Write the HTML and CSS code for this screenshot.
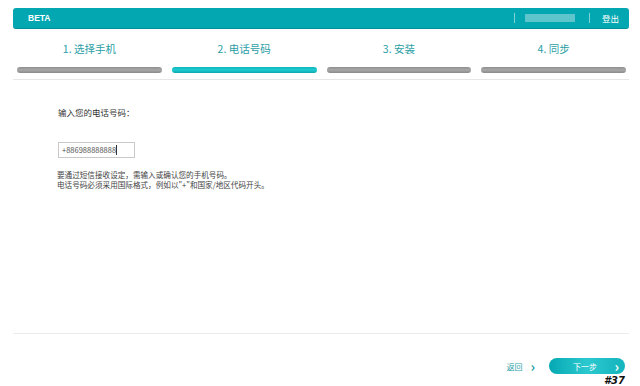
FILE: index.html
```html
<!DOCTYPE html>
<html lang="zh-CN">
<head>
	<meta charset="UTF-8">
	<title>电话号码</title>
	<link rel="stylesheet" href="styles.css">
</head>
<body>
<div class="page">
    <header class="topbar">
        <span class="brand">BETA</span>
        <div class="user">
            <span class="sep"></span>
            <span class="name"></span>
            <span class="sep"></span>
            <a href="javascript:void(0);" class="logout">登出</a>
        </div>
    </header>

    <ol class="steps">
        <li><span class="label">1. 选择手机</span><span class="bar"></span></li>
        <li class="active"><span class="label">2. 电话号码</span><span class="bar"></span></li>
        <li><span class="label">3. 安装</span><span class="bar"></span></li>
        <li><span class="label">4. 同步</span><span class="bar"></span></li>
    </ol>

    <main class="content">
        <p class="prompt">输入您的电话号码：</p>
        <div class="field">+886988888888<span class="caret"></span></div>
        <p class="help">要通过短信接收设定，需输入或确认您的手机号码。<br>电话号码必须采用国际格式，例如以"+"和国家/地区代码开头。</p>
    </main>

    <footer class="actions">
        <a href="javascript:void(0);" class="back">返回<span class="chev">&#x203A;</span></a>
        <a href="javascript:void(0);" class="next"><span>下一步</span><span class="chev">&#x203A;</span></a>
    </footer>
</div>
<div class="badge">#37</div>
</body>
</html>
```

FILE: styles.css
```css
body,html{
    padding: 0;
    margin: 0;
    background: #ffffff;
    font-family: "Noto Sans CJK SC", "Liberation Sans", sans-serif;
    color: #333333;
}
.page{
    width: 640px;
    height: 386px;
    padding: 8px 11px 0 13px;
    box-sizing: border-box;
}
.topbar{
    height: 21px;
    background: #03a7b2;
    border-bottom: 1px solid #02909a;
    border-radius: 3px;
    display: flex;
    align-items: center;
    justify-content: space-between;
    padding: 0 10px 0 15px;
    box-sizing: border-box;
    color: #ffffff;
}
.brand{
    font-family: "Liberation Sans", sans-serif;
    font-weight: bold;
    font-size: 8.5px;
}
.user{
    display: flex;
    align-items: center;
}
.sep{
    width: 1px;
    height: 10px;
    background: #7fd2d8;
}
.name{
    width: 50px;
    height: 8px;
    margin: 0 14px 0 10px;
    background: #5ec5cc;
}
.logout{
    color: #ffffff;
    text-decoration: none;
    font-size: 8.5px;
    margin-left: 12px;
}
.steps{
    list-style: none;
    margin: 14px 0 0 0;
    padding: 0 3px 6px 4px;
    display: grid;
    grid-template-columns: repeat(4, 1fr);
    column-gap: 10px;
    border-bottom: 1px solid #e6e6e6;
}
.steps li{
    display: flex;
    flex-direction: column;
    align-items: center;
}
.label{
    font-size: 10.5px;
    line-height: 12px;
    color: #2b9ea6;
}
.bar{
    margin-top: 12px;
    width: 100%;
    height: 6px;
    border-radius: 3px;
    background: linear-gradient(#8f8f8f, #a8a8a8 50%, #8a8a8a);
}
.active .bar{
    background: linear-gradient(#0fb4bc, #1fcbd1 50%, #0aa6ae);
}
.content{
    height: 254px;
    box-sizing: border-box;
    padding: 26px 0 0 45px;
    border-bottom: 1px solid #ececec;
}
.prompt{
    margin: 0;
    font-size: 8.5px;
    line-height: 12px;
    color: #333333;
}
.field{
    margin-top: 24px;
    width: 77px;
    height: 16px;
    box-sizing: border-box;
    border: 1px solid #c9c9c9;
    padding: 0 3px;
    font-size: 7.5px;
    line-height: 14px;
    color: #555555;
    display: flex;
    align-items: center;
}
.caret{
    width: 1px;
    height: 10px;
    background: #333333;
}
.help{
    margin: 12px 0 0 -1px;
    font-size: 7.6px;
    line-height: 10px;
    color: #444444;
}
.actions{
    display: flex;
    justify-content: flex-end;
    align-items: center;
    padding: 24px 4px 0 0;
}
.back{
    font-size: 8px;
    color: #2b9ea6;
    text-decoration: none;
    display: flex;
    align-items: center;
}
.back .chev{
    margin-left: 8px;
    font-size: 14px;
    font-weight: bold;
    line-height: 14px;
}
.next{
    margin-left: 14px;
    width: 76px;
    height: 16px;
    border-radius: 8px;
    background: linear-gradient(90deg, #05a9b3, #2cc8cf 50%, #13b4bd);
    color: #ffffff;
    text-decoration: none;
    font-size: 8px;
    display: flex;
    align-items: center;
    justify-content: space-between;
    padding: 0 6px 0 24px;
    box-sizing: border-box;
}
.next .chev{
    font-size: 14px;
    font-weight: bold;
    line-height: 14px;
}
.badge{
    position: absolute;
    left: 604px;
    top: 375px;
    font-family: "DejaVu Sans", sans-serif;
    font-weight: bold;
    font-style: italic;
    font-size: 10px;
    line-height: 11px;
    color: #111111;
    text-shadow: 1px 0 #fff, -1px 0 #fff, 0 1px #fff, 0 -1px #fff;
}
```
